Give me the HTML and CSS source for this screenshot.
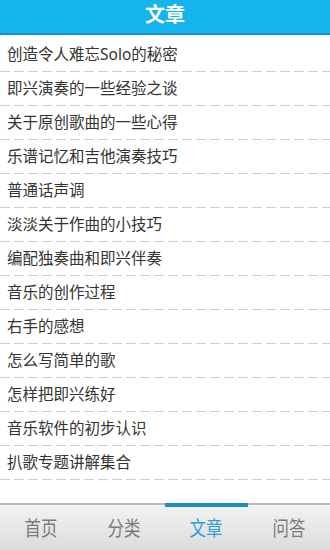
FILE: index.html
```html
<!DOCTYPE html>
<html lang="zh">
<head>
<meta charset="utf-8">
<title>文章</title>
<link rel="stylesheet" href="styles.css">
</head>
<body>
<div class="app">
  <header class="topbar"><h1 class="title">文章</h1></header>
  <ul class="list">
    <li class="row">创造令人难忘Solo的秘密</li>
    <li class="row">即兴演奏的一些经验之谈</li>
    <li class="row">关于原创歌曲的一些心得</li>
    <li class="row">乐谱记忆和吉他演奏技巧</li>
    <li class="row">普通话声调</li>
    <li class="row">淡淡关于作曲的小技巧</li>
    <li class="row">编配独奏曲和即兴伴奏</li>
    <li class="row">音乐的创作过程</li>
    <li class="row">右手的感想</li>
    <li class="row">怎么写简单的歌</li>
    <li class="row">怎样把即兴练好</li>
    <li class="row">音乐软件的初步认识</li>
    <li class="row">扒歌专题讲解集合</li>
  </ul>
  <nav class="tabbar">
    <div class="tab"><span class="tab-label">首页</span></div>
    <div class="tab"><span class="tab-label">分类</span></div>
    <div class="tab tab-active"><span class="tab-label">文章</span></div>
    <div class="tab"><span class="tab-label">问答</span></div>
  </nav>
</div>
</body>
</html>
```

FILE: styles.css
```css
html, body {
  margin: 0;
  padding: 0;
  background: #ffffff;
}
body {
  font-family: "Noto Sans", "Noto Sans CJK SC", sans-serif;
}
.app {
  width: 330px;
  height: 550px;
  display: flex;
  flex-direction: column;
  overflow: hidden;
}
.topbar {
  height: 33px;
  flex: 0 0 33px;
  background: #15b4ea;
  border-bottom: 1px dotted #0b84b6;
  box-shadow: 0 1px 0 #0d8fc2;
  display: flex;
  align-items: center;
  justify-content: center;
}
.title {
  margin: 0;
  font-size: 20px;
  font-weight: bold;
  color: #ffffff;
  line-height: 1;
  transform: translateY(-2px);
}
.list {
  list-style: none;
  margin: 0;
  padding: 4px 0 0 0;
  flex: 1 1 auto;
}
.row {
  height: 33px;
  line-height: 33px;
  padding-left: 7px;
  font-size: 15.5px;
  color: #333333;
  padding-bottom: 1px;
  background-image: repeating-linear-gradient(to right, #cfcfcf 0 10px, transparent 10px 14px);
  background-size: 100% 1px;
  background-position: left bottom;
  background-repeat: no-repeat;
  white-space: nowrap;
}
.tabbar {
  flex: 0 0 45px;
  height: 45px;
  display: grid;
  grid-template-columns: repeat(4, 1fr);
  border-top: 2px solid #b9b9b9;
  background: linear-gradient(to bottom, #f2f2f2, #dcdcdc);
}
.tab {
  display: flex;
  align-items: center;
  justify-content: center;
  position: relative;
}
.tab-label {
  font-size: 20px;
  color: #7a7a7a;
  display: inline-block;
  transform: scaleX(0.82);
}
.tab-active .tab-label {
  color: #2c9fd3;
}
.tab-active::before {
  content: "";
  position: absolute;
  left: 0;
  right: 0;
  top: -2px;
  height: 4px;
  background: #1f8fbb;
}
```
